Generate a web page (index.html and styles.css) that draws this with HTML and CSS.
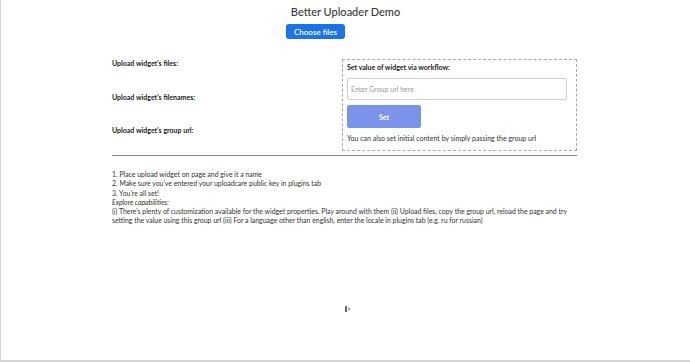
FILE: index.html
```html
<!DOCTYPE html>
<html>
<head>
<meta charset="utf-8">
<link rel="stylesheet" href="styles.css">
</head>
<body>
<div class="frame">
  <header class="head">
    <h1 class="title">Better Uploader Demo</h1>
    <button class="choose">Choose files</button>
  </header>
  <main class="content">
    <section class="top">
      <div class="labels">
        <div class="label">Upload widget's files:</div>
        <div class="label">Upload widget's filenames:</div>
        <div class="label">Upload widget's group url:</div>
      </div>
      <div class="box">
        <div class="box-title">Set value of widget via workflow:</div>
        <input class="url" type="text" placeholder="Enter Group url here">
        <button class="set">Set</button>
        <div class="note">You can also set initial content by simply passing the group url</div>
      </div>
    </section>
    <hr class="rule">
    <section class="steps">
      <div>1. Place upload widget on page and give it a name</div>
      <div>2. Make sure you've entered your uploadcare public key in plugins tab</div>
      <div>3. You're all set!</div>
      <div><em>Explore capabilities:</em></div>
      <div>(i) There's plenty of customization available for the widget properties. Play around with them (ii) Upload files, copy the group url, reload the page and try setting the value using this group url (iii) For a language other than english, enter the locale in plugins tab (e.g. ru for russian)</div>
    </section>
  </main>
  <div class="cursor"><span class="ibeam"></span><span class="arrow"></span></div>
</div>
</body>
</html>
```
FILE: styles.css
```css
* { box-sizing: border-box; }
html, body { margin: 0; padding: 0; background: #fff; }
body { font-family: Lato, "Liberation Sans", sans-serif; color: #333; }
.frame {
  position: relative;
  width: 690px;
  height: 362px;
  border-left: 1px solid #d6d6d6;
  border-bottom: 2px solid #d6d6d6;
}
.head {
  display: flex;
  flex-direction: column;
  align-items: center;
  padding-top: 5px;
}
.title {
  margin: 0;
  font-size: 11px;
  font-weight: 500;
  line-height: 14px;
  color: #3a3a3a;
}
.choose {
  margin-top: 5px;
  margin-right: 60px;
  width: 59px;
  height: 15px;
  padding: 0;
  border: none;
  border-radius: 3px;
  background: #1a73e8;
  color: #fff;
  font-family: Lato, "Liberation Sans", sans-serif;
  font-size: 8px;
  font-weight: 600;
}
.content {
  width: 465px;
  margin: 20px 0 0 111px;
}
.top {
  display: flex;
  justify-content: space-between;
}
.labels {
  display: flex;
  flex-direction: column;
  gap: 24.5px;
}
.label {
  font-size: 7px;
  font-weight: 700;
  color: #222;
  line-height: 9px;
}
.box {
  width: 235px;
  height: 92px;
  border: 1px dashed #a8a8a8;
  padding: 3px 4px 0 4px;
  display: flex;
  flex-direction: column;
  align-items: flex-start;
}
.box-title {
  font-size: 7px;
  font-weight: 700;
  color: #222;
  line-height: 9px;
}
.url {
  margin-top: 6px;
  width: 220px;
  height: 22px;
  border: 1px solid #cfcfcf;
  border-radius: 2px;
  padding: 0 3px;
  font-family: Lato, "Liberation Sans", sans-serif;
  font-size: 7px;
  color: #333;
}
.url::placeholder { color: #9a9a9a; }
.set {
  margin-top: 5px;
  width: 74px;
  height: 23px;
  border: none;
  border-radius: 2px;
  background: #7b93e8;
  color: #fff;
  font-family: Lato, "Liberation Sans", sans-serif;
  font-size: 7px;
  font-weight: 700;
}
.note {
  margin-top: 6px;
  font-size: 7px;
  line-height: 9px;
  color: #333;
}
.rule {
  margin: 4px 0 0 0;
  border: none;
  border-top: 1px solid #8a8a8a;
  height: 0;
}
.steps {
  margin-top: 14px;
  font-size: 6.9px;
  line-height: 9.3px;
  color: #333;
}
.cursor {
  position: absolute;
  left: 344px;
  top: 306px;
  display: flex;
  align-items: flex-end;
  gap: 1px;
}
.ibeam {
  display: block;
  width: 2px;
  height: 6px;
  background: #666;
}
.arrow {
  display: block;
  width: 0;
  height: 0;
  margin-bottom: 1px;
  border-top: 2px solid transparent;
  border-bottom: 2px solid transparent;
  border-left: 3px solid #aaa;
}
```
